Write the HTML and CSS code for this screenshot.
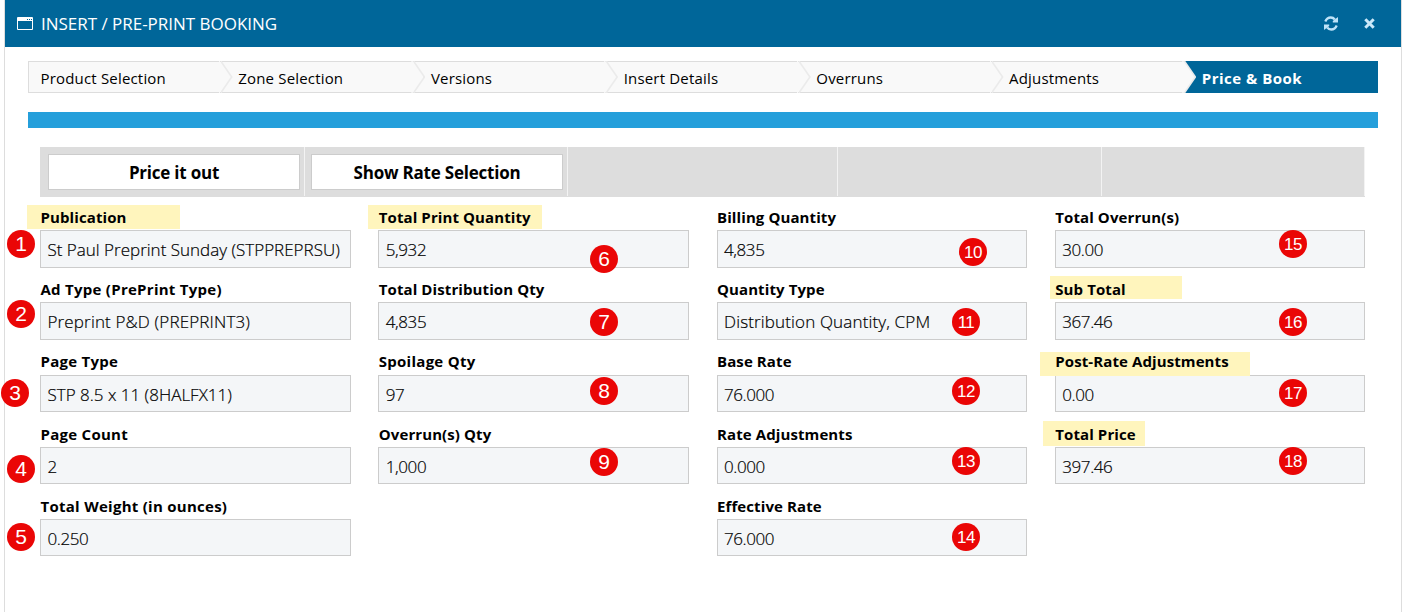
FILE: index.html
```
<!DOCTYPE html>
<html lang="en">
<head>
<meta charset="utf-8">
<title>Insert / Pre-Print Booking</title>
<link rel="stylesheet" href="styles.css">
</head>
<body>
<div class="window">
  <header class="titlebar">
    <svg class="win-icon" width="16" height="13" viewBox="0 0 16 13"><path d="M0.5 0.5h15v12h-15z" fill="none" stroke="#fff"/><path d="M1 1h14v3H1z" fill="#fff"/><path d="M10 2h1v1h-1zM12 2h1v1h-1zM14 2h1v1h-1z" fill="#069"/></svg>
    <h1 class="title">INSERT / PRE-PRINT BOOKING</h1>
    <svg class="refresh-icon" width="14" height="15" viewBox="0 0 14 15"><path d="M1.300 5.500C2.400 2.800 4.200 1.500 6.800 1.500c1.700 0 3 .7 4 2M12.700 9.500C11.600 12.200 9.800 13.500 7.200 13.500c-1.700 0-3-.7-4-2" fill="none" stroke="#bfe3f8" stroke-width="2.300"/><path d="M14 1v5.500H8.800V5zM0 14V8.500h5.200V10z" fill="#bfe3f8"/></svg>
    <svg class="close-icon" width="11" height="11" viewBox="0 0 11 11"><path d="M1.300 1.300l8.400 8.400M9.700 1.300l-8.400 8.400" stroke="#cbe8f9" stroke-width="3"/></svg>
  </header>
  <main class="content">
    <nav class="steps">
      <div class="step">Product Selection</div>
      <div class="step">Zone Selection</div>
      <div class="step">Versions</div>
      <div class="step">Insert Details</div>
      <div class="step">Overruns</div>
      <div class="step">Adjustments</div>
      <div class="step active">Price &amp; Book</div>
    </nav>
    <div class="bar"></div>
    <div class="toolbar">
      <div class="cell"><button class="btn">Price it out</button></div>
      <div class="cell"><button class="btn">Show Rate Selection</button></div>
      <div class="cell"></div>
      <div class="cell"></div>
      <div class="cell"></div>
    </div>
    <section class="form">
      <div class="field"><div class="label"><i class="mark m1"></i><span>Publication</span></div><div class="value wide">St Paul Preprint Sunday (STPPREPRSU)</div></div>
      <div class="field"><div class="label loose"><span>Ad Type (PrePrint Type)</span></div><div class="value wide extra">Preprint P&amp;D (PREPRINT3)</div></div>
      <div class="field"><div class="label loose"><span>Page Type</span></div><div class="value wide">STP 8.5 x 11 (8HALFX11)</div></div>
      <div class="field"><div class="label loose"><span>Page Count</span></div><div class="value">2</div></div>
      <div class="field"><div class="label loose"><span>Total Weight (in ounces)</span></div><div class="value">0.250</div></div>
      <div class="field"><div class="label"><i class="mark m2"></i><span>Total Print Quantity</span></div><div class="value">5,932</div></div>
      <div class="field"><div class="label"><span>Total Distribution Qty</span></div><div class="value">4,835</div></div>
      <div class="field"><div class="label loose"><span>Spoilage Qty</span></div><div class="value">97</div></div>
      <div class="field"><div class="label"><span>Overrun(s) Qty</span></div><div class="value">1,000</div></div>
      <div class="field blank"></div>
      <div class="field"><div class="label"><span>Billing Quantity</span></div><div class="value">4,835</div></div>
      <div class="field"><div class="label"><span>Quantity Type</span></div><div class="value wide extra">Distribution Quantity, CPM</div></div>
      <div class="field"><div class="label"><span>Base Rate</span></div><div class="value">76.000</div></div>
      <div class="field"><div class="label"><span>Rate Adjustments</span></div><div class="value">0.000</div></div>
      <div class="field"><div class="label"><span>Effective Rate</span></div><div class="value">76.000</div></div>
      <div class="field"><div class="label"><span>Total Overrun(s)</span></div><div class="value">30.00</div></div>
      <div class="field"><div class="label"><i class="mark m3"></i><span>Sub Total</span></div><div class="value">367.46</div></div>
      <div class="field"><div class="label"><i class="mark m4"></i><span>Post-Rate Adjustments</span></div><div class="value">0.00</div></div>
      <div class="field"><div class="label"><i class="mark m5"></i><span>Total Price</span></div><div class="value">397.46</div></div>
    </section>
  </main>
</div>
<div class="pins">
  <b class="pin p1">1</b><b class="pin p2">2</b><b class="pin p3">3</b><b class="pin p4">4</b><b class="pin p5">5</b><b class="pin p6">6</b><b class="pin p7">7</b><b class="pin p8">8</b><b class="pin p9">9</b>
  <b class="pin two p10">10</b><b class="pin two p11">11</b><b class="pin two p12">12</b><b class="pin two p13">13</b><b class="pin two p14">14</b><b class="pin two p15">15</b><b class="pin two p16">16</b><b class="pin two p17">17</b><b class="pin two p18">18</b>
</div>
</body>
</html>
```
FILE: styles.css
```
* { box-sizing: border-box; }
body { margin: 0; height: 612px; overflow: hidden; background: #fff; color: #000; font-family: "Open Sans", "Noto Sans", sans-serif; position: relative; }
.window { margin-left: 4px; width: 1398px; height: 612px; border: solid #ddd; border-width: 0 1px; }
.titlebar { height: 47px; background: #069; display: flex; align-items: center; padding: 0 26px 0 12px; color: #fff; }
.title { margin: 0 auto 0 8px; font-size: 17px; font-weight: 400; letter-spacing: -0.02px; line-height: 47px; }
.refresh-icon { margin-right: 26px; }
.content { padding: 14px 23px 0; }

.steps { display: grid; grid-template-columns: repeat(7, 1fr); height: 32px; border: 1px solid #ddd; border-right: 0; background: #f9f9f9; }
.step { position: relative; padding-left: 16.5px; font-size: 15px; line-height: 32px; white-space: nowrap; letter-spacing: 0.18px; }
.step:first-child { padding-left: 11.500px; }
.step + .step::before, .step + .step::after { content: ""; position: absolute; top: -1px; left: -1px; width: 12px; height: 32px; background: #ebebeb; clip-path: polygon(0 0, 1px 0, 12px 16px, 1px 32px, 0 32px); }
.step + .step::after { left: -3px; background: #f9f9f9; }
.step.active { background: #069; color: #fff; font-weight: 700; height: 32px; margin-top: -1px; line-height: 34px; letter-spacing: 0.5px; }
.step.active::before, .step.active::after { top: 0; }

.bar { height: 16px; margin-top: 19px; background: #259fdb; }
.toolbar { margin: 19px 13px 0 12px; height: 50px; display: grid; grid-template-columns: 265px 263px 270px 264px 1fr; background: #ddd; }
.cell { height: 49px; border-right: 1px solid #f3f3f3; padding: 7px 4px 0 6px; }
.cell:first-child { padding-left: 8px; }
.btn { display: block; width: 252px; height: 36px; padding: 2px 0 0; border: 1px solid #ccc; background: #fff; color: #000; font: 700 17px/32px "Open Sans", sans-serif; letter-spacing: -0.22px; }

.form { margin-left: 12px; display: grid; grid-auto-flow: column; grid-template-rows: repeat(5, 72.2px); grid-template-columns: repeat(4, 310.5px); column-gap: 27.75px; }
.label { position: relative; height: 33.25px; padding: 10px 0 0 0.5px; font-size: 15px; font-weight: 700; line-height: 20px; white-space: nowrap; letter-spacing: 0.1px; }
.label.loose { letter-spacing: 0.27px; }
.label span { position: relative; }
.value { height: 37.25px; border: 1px solid #ccc; background: #f4f6f8; padding-left: 6.500px; font-size: 17px; font-weight: 300; line-height: 38px; white-space: nowrap; letter-spacing: -0.4px; -webkit-text-stroke: 0.2px #000; }
.value.wide { letter-spacing: 0; }
.value.extra { letter-spacing: 0.15px; }
.mark { position: absolute; background: #fff5bd; top: 8px; height: 24px; }
.m1 { left: -13px; width: 153px; }
.m2 { left: -10px; width: 174px; }
.m3 { left: -5px; width: 132px; top: 7px; height: 23px; }
.m4 { left: -15px; width: 210px; top: 10.5px; }
.m5 { left: -12px; width: 102px; top: 7.500px; height: 25px; }

.pin { position: absolute; width: 28px; height: 28px; margin: -14px 0 0 -14px; border-radius: 50%; background: #ea0606; color: #fff; text-align: center; font: 400 21px/28px "Liberation Sans", Arial, sans-serif; }
.pin.two { font-size: 17px; line-height: 29px; letter-spacing: -0.5px; }
.p1 { left: 21px; top: 244px; }
.p2 { left: 21px; top: 314px; }
.p3 { left: 15px; top: 393px; }
.p4 { left: 21px; top: 469px; }
.p5 { left: 21px; top: 537px; }
.p6 { left: 604px; top: 259px; }
.p7 { left: 604px; top: 322px; }
.p8 { left: 604px; top: 391px; }
.p9 { left: 604px; top: 462px; }
.p10 { left: 973px; top: 252px; }
.p11 { left: 966px; top: 322px; }
.p12 { left: 966px; top: 391px; }
.p13 { left: 966px; top: 461px; }
.p14 { left: 966px; top: 537px; }
.p15 { left: 1293px; top: 244px; }
.p16 { left: 1293px; top: 322px; }
.p17 { left: 1293px; top: 393px; }
.p18 { left: 1293px; top: 461px; }
```
